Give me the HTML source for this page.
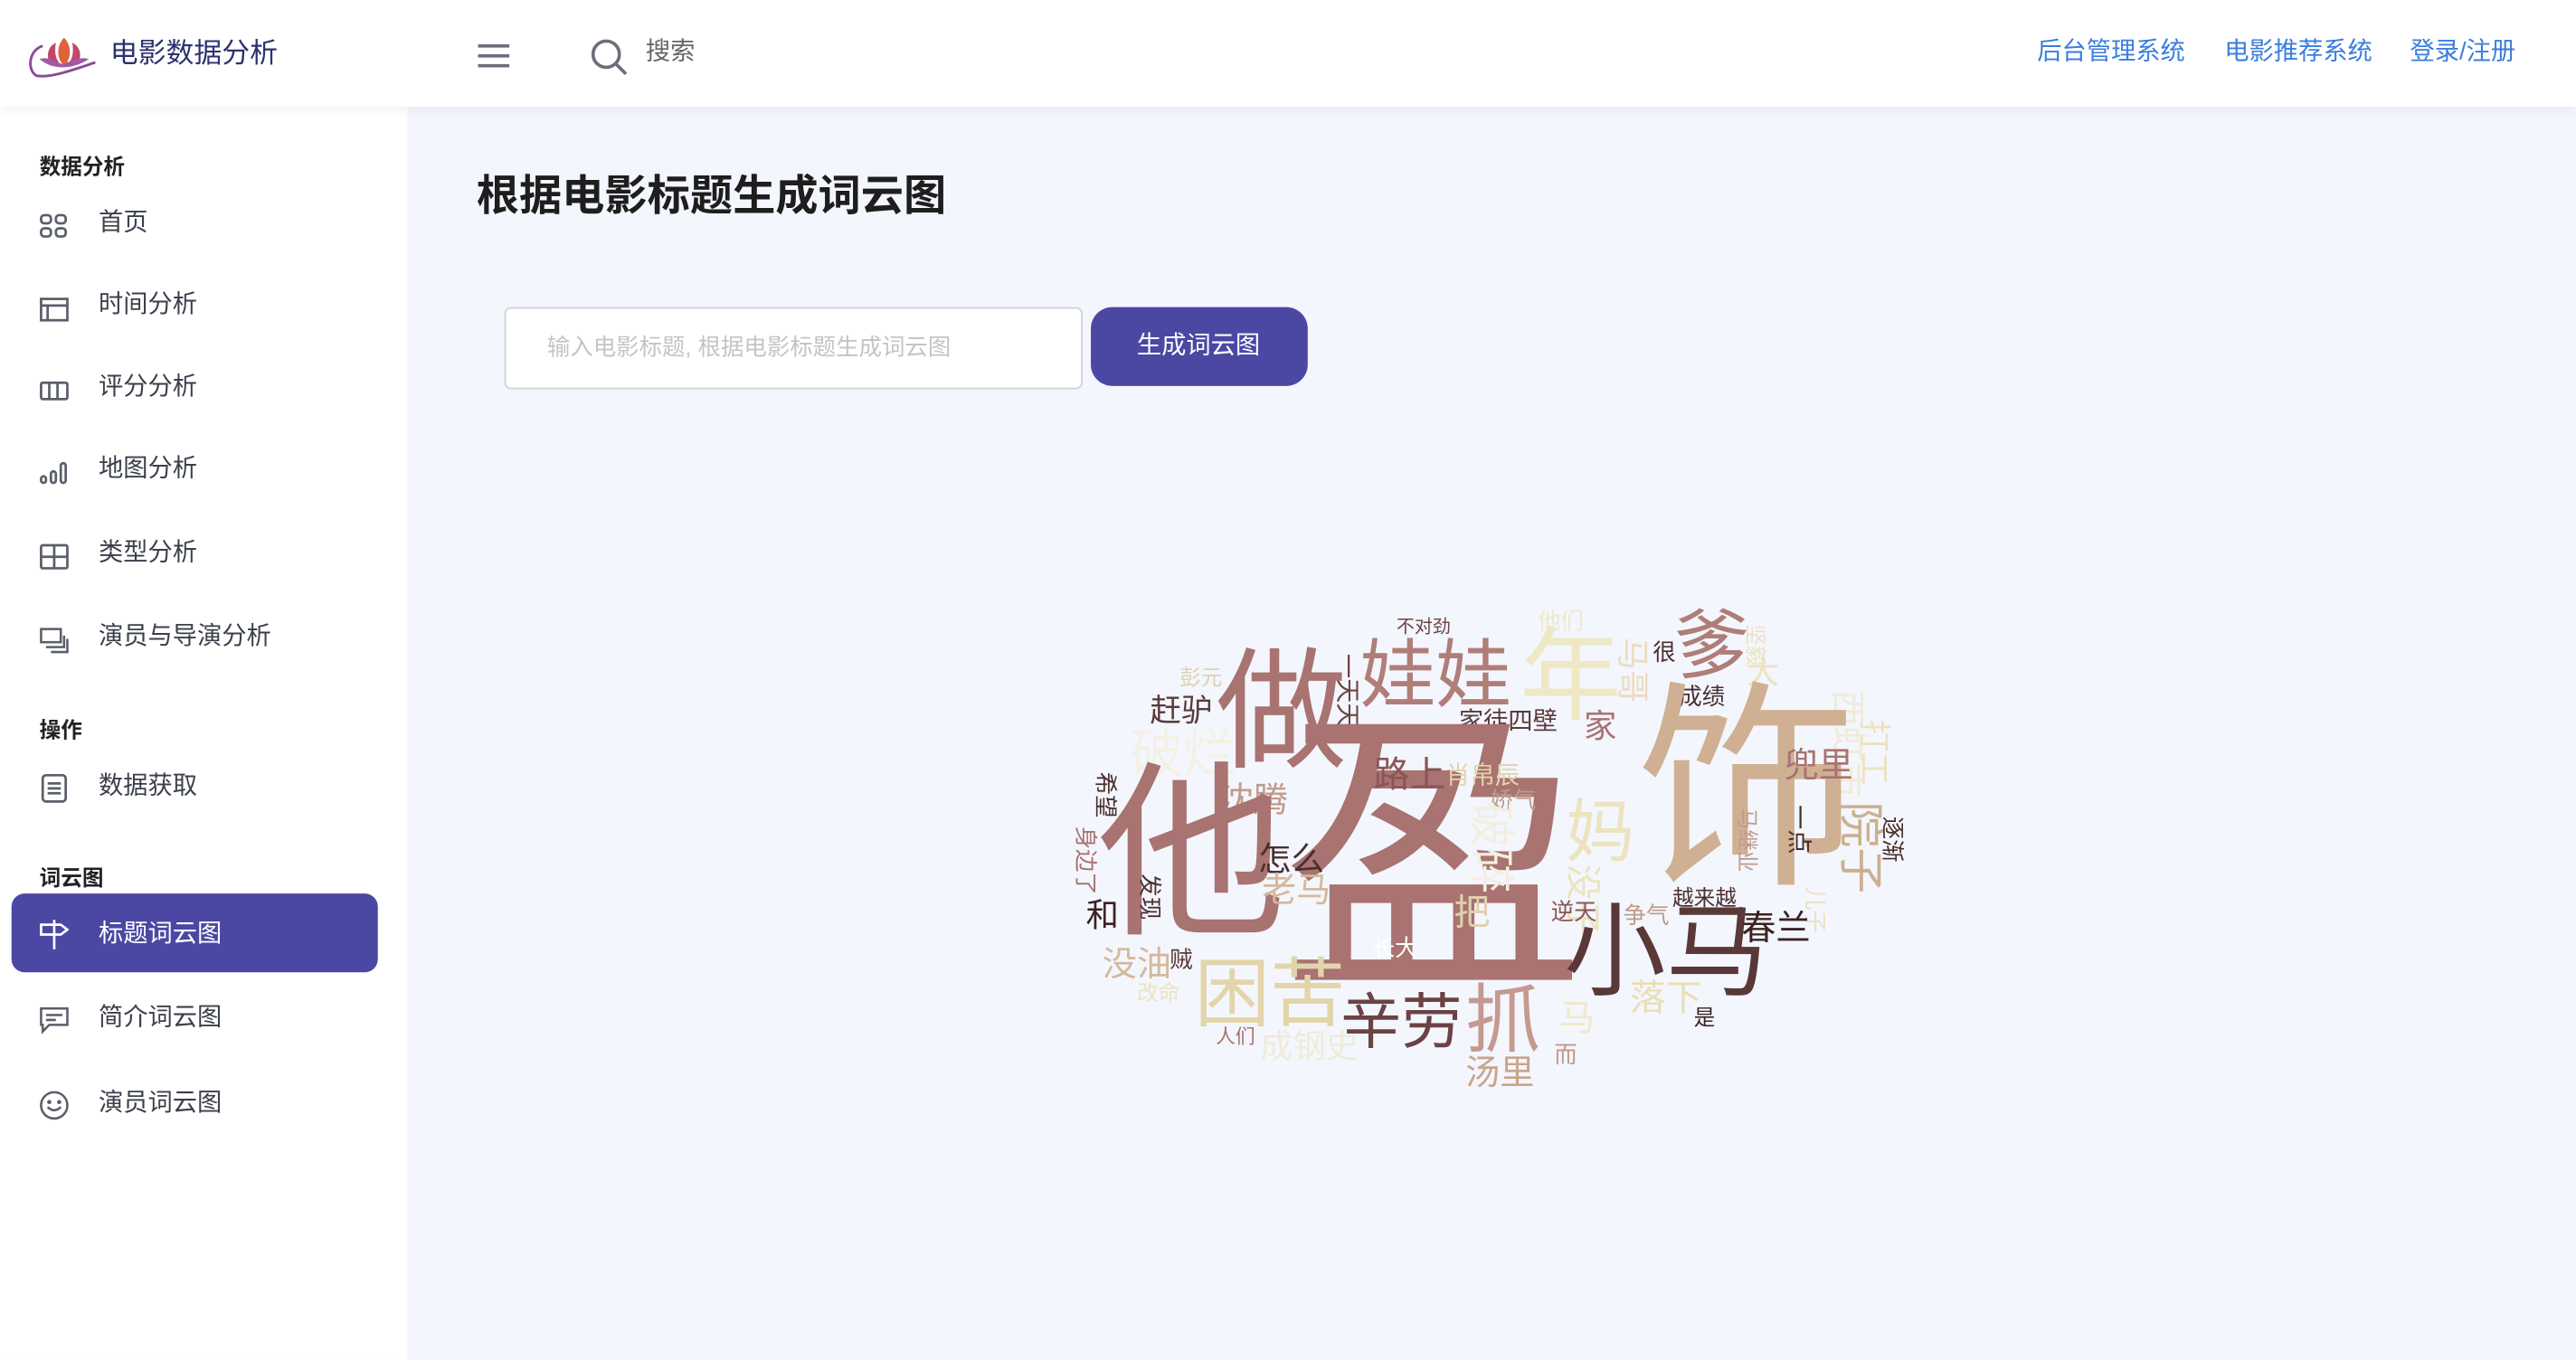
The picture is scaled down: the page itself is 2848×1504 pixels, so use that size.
<!DOCTYPE html>
<html><head><meta charset="utf-8">
<style>
*{margin:0;padding:0;box-sizing:border-box}
html,body{width:2848px;height:1504px;overflow:hidden;background:#f3f6fd}
body{font-family:"Liberation Sans","Noto Sans CJK SC",sans-serif}
#w{position:absolute;left:0;top:0;width:1568px;height:828px;transform:scale(1.81633);transform-origin:0 0;background:#f3f6fd}
.a{position:absolute;white-space:nowrap;line-height:1}
#hd{position:absolute;left:0;top:0;width:1568px;height:65px;background:#fff;box-shadow:0 2px 6px rgba(0,0,0,.06);z-index:2}
#sb{position:absolute;left:0;top:65px;width:248px;height:763px;background:#fff}
.lab{position:absolute;left:24px;font-size:13px;font-weight:bold;color:#222}
.it{position:absolute;left:60px;font-size:15px;color:#3a3f4a;line-height:1}
.ic{position:absolute;left:24px;width:18px;height:18px}
.v{writing-mode:vertical-rl;text-orientation:sideways}
</style></head><body><div id="w">
<div id="hd">
 <svg class="a" style="left:16px;top:20px" width="44" height="28" viewBox="0 0 44 28">
  <path d="M10 8 C2 10 0 22 6 26 C14 28 30 22 42 18" fill="none" stroke="#8a4a9a" stroke-width="1.6"/>
  <path d="M14 18 C12 12 14 8 18 6 C17 12 18 16 20 18Z" fill="#c0486a"/>
  <path d="M22 19 C18 14 19 7 23 3 C27 7 28 14 24 19Z" fill="#e2603a"/>
  <path d="M26 18 C28 16 29 12 28 6 C32 8 34 12 32 18Z" fill="#c0486a"/>
  <path d="M8 16 C14 14 18 18 22 19 C26 18 32 14 38 16 C32 20 26 21 22 21 C16 21 12 19 8 16Z" fill="#a25aa0"/>
 </svg>
 <div class="a" style="left:67px;top:24px;font-size:17px;color:#2c3270">电影数据分析</div>
 <svg class="a" style="left:290px;top:26px" width="21" height="16"><g stroke="#6b6f7a" stroke-width="2"><line x1="1" y1="2" x2="20" y2="2"/><line x1="1" y1="8" x2="20" y2="8"/><line x1="1" y1="14" x2="20" y2="14"/></g></svg>
 <svg class="a" style="left:359px;top:23px" width="24" height="24"><circle cx="10" cy="10" r="8" fill="none" stroke="#6b6f7a" stroke-width="2"/><line x1="16" y1="16" x2="22" y2="22" stroke="#6b6f7a" stroke-width="2"/></svg>
 <div class="a" style="left:393px;top:24px;font-size:15px;color:#666">搜索</div>
 <div class="a" style="left:1240px;top:24px;font-size:15px;color:#3b7ddd">后台管理系统</div>
 <div class="a" style="left:1354px;top:24px;font-size:15px;color:#3b7ddd">电影推荐系统</div>
 <div class="a" style="left:1467px;top:24px;font-size:15px;color:#3b7ddd">登录/注册</div>
</div>
<div id="sb">
 <div class="lab" style="top:26px">数据分析</div>
 <svg class="ic" style="top:64px" viewBox="0 0 18 18" fill="none" stroke="#5a5f6a" stroke-width="1.5"><rect x="1" y="2" width="6" height="5" rx="2"/><rect x="10" y="2" width="6" height="5" rx="2"/><rect x="1" y="10" width="6" height="5" rx="2"/><rect x="10" y="10" width="6" height="5" rx="2"/></svg>
 <div class="it" style="top:63px">首页</div>
 <svg class="ic" style="top:114px" viewBox="0 0 18 18" fill="none" stroke="#5a5f6a" stroke-width="1.5"><rect x="1" y="3" width="16" height="13"/><line x1="1" y1="7" x2="17" y2="7"/><line x1="5" y1="7" x2="5" y2="16"/></svg>
 <div class="it" style="top:113px">时间分析</div>
 <svg class="ic" style="top:164px" viewBox="0 0 18 18" fill="none" stroke="#5a5f6a" stroke-width="1.5"><rect x="1" y="4" width="16" height="10" rx="1"/><line x1="6" y1="4" x2="6" y2="14"/><line x1="11" y1="4" x2="11" y2="14"/></svg>
 <div class="it" style="top:163px">评分分析</div>
 <svg class="ic" style="top:214px" viewBox="0 0 18 18" fill="none" stroke="#5a5f6a" stroke-width="1.5"><rect x="1" y="11" width="3" height="4" rx="1.5"/><rect x="7" y="8" width="3" height="7" rx="1.5"/><rect x="13" y="3" width="3" height="12" rx="1.5"/></svg>
 <div class="it" style="top:213px">地图分析</div>
 <svg class="ic" style="top:265px" viewBox="0 0 18 18" fill="none" stroke="#5a5f6a" stroke-width="1.5"><rect x="1" y="2" width="16" height="14" rx="1"/><line x1="9" y1="2" x2="9" y2="16"/><line x1="1" y1="9" x2="17" y2="9"/></svg>
 <div class="it" style="top:264px">类型分析</div>
 <svg class="ic" style="top:315px" viewBox="0 0 18 18" fill="none" stroke="#5a5f6a" stroke-width="1.4"><rect x="1" y="3" width="12" height="8"/><path d="M4 14 H15 V7 M17 9 V17 H7"/></svg>
 <div class="it" style="top:315px">演员与导演分析</div>
 <div class="lab" style="top:369px">操作</div>
 <svg class="ic" style="top:406px" viewBox="0 0 18 18" fill="none" stroke="#5a5f6a" stroke-width="1.5"><rect x="2" y="1" width="14" height="16" rx="2"/><line x1="5" y1="6" x2="13" y2="6"/><line x1="5" y1="9" x2="13" y2="9"/><line x1="5" y1="12" x2="13" y2="12"/></svg>
 <div class="it" style="top:406px">数据获取</div>
 <div class="lab" style="top:459px">词云图</div>
 <div style="position:absolute;left:7px;top:479px;width:223px;height:48px;background:#4b48a3;border-radius:8px"></div>
 <svg class="ic" style="top:495px" viewBox="0 0 18 18" fill="none" stroke="#fff" stroke-width="1.5"><path d="M1 3 H13 L17 6 L13 9 H1Z"/><line x1="9" y1="0" x2="9" y2="18"/></svg>
 <div class="it" style="top:496px;color:#fff">标题词云图</div>
 <svg class="ic" style="top:547px" viewBox="0 0 18 18" fill="none" stroke="#5a5f6a" stroke-width="1.4"><path d="M1 2 H17 V12 H6 L2 16 V12 H1Z"/><line x1="4" y1="6" x2="14" y2="6"/><line x1="4" y1="9" x2="10" y2="9"/></svg>
 <div class="it" style="top:547px">简介词云图</div>
 <svg class="ic" style="top:599px" viewBox="0 0 18 18" fill="none" stroke="#5a5f6a" stroke-width="1.4"><circle cx="9" cy="9" r="8"/><path d="M5 10 Q9 14 13 10"/><circle cx="6" cy="7" r=".6"/><circle cx="12" cy="7" r=".6"/></svg>
 <div class="it" style="top:599px">演员词云图</div>
</div>
<div class="a" style="left:290px;top:106px;font-size:26px;font-weight:bold;color:#1e1e1e">根据电影标题生成词云图</div>
<div style="position:absolute;left:307px;top:187px;width:352px;height:50px;background:#fff;border:1px solid #cfd2d8;border-radius:4px"></div>
<div class="a" style="left:333px;top:204px;font-size:14px;color:#c4c4c4">输入电影标题, 根据电影标题生成词云图</div>
<div style="position:absolute;left:664px;top:187px;width:132px;height:48px;background:#4b48a3;border-radius:13px"></div>
<div class="a" style="left:692px;top:203px;font-size:15px;color:#fff">生成词云图</div>

<!-- word cloud -->
<div class="a" style="left:850px;top:377px;font-size:11px;color:#6b4343">不对劲</div>
<div class="a" style="left:936px;top:371px;font-size:14px;color:#efe9c9">他们</div>
<div class="a" style="left:718px;top:406px;font-size:13px;color:#e0d0b0">彭元</div>
<div class="a v" style="left:812px;top:398px;font-size:15px;color:#6b4343">一天天</div>
<div class="a" style="left:828px;top:388px;font-size:46px;color:#b07d78">娃娃</div>
<div class="a" style="left:925px;top:382px;font-size:62px;color:#eee8c4">年</div>
<div class="a v" style="left:983px;top:388px;font-size:20px;color:#ecdcc0">马哥</div>
<div class="a" style="left:1006px;top:390px;font-size:14px;color:#4a2e2e">很</div>
<div class="a" style="left:1019px;top:370px;font-size:46px;color:#b07d78">爹</div>
<div class="a" style="left:1063px;top:400px;font-size:20px;color:#ece3bf">大</div>
<div class="a v" style="left:1062px;top:380px;font-size:13px;color:#ece3bf">坚毅</div>
<div class="a" style="left:1022px;top:417px;font-size:14px;color:#4a2e2e">成绩</div>
<div class="a v" style="left:1113px;top:420px;font-size:22px;color:#f0ebd8">西虹市</div>
<div class="a" style="left:740px;top:394px;font-size:80px;color:#a87370">做</div>
<div class="a" style="left:700px;top:424px;font-size:19px;color:#5a3a3a">赶驴</div>
<div class="a" style="left:888px;top:432px;font-size:15px;color:#5a3a3a">家徒四壁</div>
<div class="a" style="left:964px;top:433px;font-size:20px;color:#a87370">家</div>
<div class="a" style="left:688px;top:443px;font-size:32px;color:#f4f1e4">破烂</div>
<div class="a v" style="left:1130px;top:438px;font-size:20px;color:#ece3bf">打工</div>
<div class="a" style="left:996px;top:414px;font-size:135px;color:#cfb092">饰</div>
<div class="a" style="left:780px;top:432px;font-size:185px;color:#a87370">盈</div>
<div class="a" style="left:836px;top:461px;font-size:22px;color:#8a5555">路上</div>
<div class="a" style="left:880px;top:465px;font-size:15px;color:#e3d4aa">肖帛辰</div>
<div class="a" style="left:1086px;top:456px;font-size:21px;color:#a87370">兜里</div>
<div class="a" style="left:742px;top:477px;font-size:21px;color:#c09a8a">沈腾</div>
<div class="a" style="left:907px;top:480px;font-size:14px;color:#c09a8a">娇气</div>
<div class="a v" style="left:666px;top:470px;font-size:14px;color:#4a2e2e">希望</div>
<div class="a" style="left:668px;top:464px;font-size:115px;color:#a87370">他</div>
<div class="a" style="left:953px;top:486px;font-size:42px;color:#ece3bf">妈</div>
<div class="a v" style="left:893px;top:488px;font-size:28px;color:#f2efe2">破碎</div>
<div class="a v" style="left:1087px;top:490px;font-size:15px;color:#4a2e2e">一点</div>
<div class="a v" style="left:1118px;top:488px;font-size:28px;color:#ccb08e">院子</div>
<div class="a v" style="left:1145px;top:497px;font-size:14px;color:#4a2e2e">逐渐</div>
<div class="a v" style="left:1057px;top:492px;font-size:13px;color:#c09a8a">马继业</div>
<div class="a v" style="left:654px;top:503px;font-size:14px;color:#a87370">身边了</div>
<div class="a" style="left:766px;top:514px;font-size:20px;color:#4a2e2e">怎么</div>
<div class="a" style="left:768px;top:532px;font-size:21px;color:#d4b89b">老马</div>
<div class="a v" style="left:952px;top:526px;font-size:22px;color:#ece3bf">没子</div>
<div class="a v" style="left:693px;top:532px;font-size:14px;color:#4a2e2e">发现</div>
<div class="a" style="left:661px;top:548px;font-size:20px;color:#3a2222">和</div>
<div class="a" style="left:885px;top:545px;font-size:22px;color:#e0d0b0">把</div>
<div class="a" style="left:944px;top:548px;font-size:14px;color:#8a5555">逆天</div>
<div class="a" style="left:988px;top:550px;font-size:14px;color:#c09a8a">争气</div>
<div class="a" style="left:1018px;top:540px;font-size:13px;color:#4a2e2e">越来越</div>
<div class="a v" style="left:1098px;top:540px;font-size:14px;color:#ece3bf">儿子</div>
<div class="a" style="left:952px;top:550px;font-size:62px;color:#5a3838">小马</div>
<div class="a" style="left:1060px;top:555px;font-size:21px;color:#3a2222">春兰</div>
<div class="a" style="left:835px;top:570px;font-size:14px;color:#fff">长大</div>
<div class="a" style="left:671px;top:577px;font-size:21px;color:#d4b89b">没油</div>
<div class="a" style="left:712px;top:577px;font-size:14px;color:#5a3a3a">贼</div>
<div class="a" style="left:727px;top:582px;font-size:46px;color:#e3d4aa">困苦</div>
<div class="a" style="left:692px;top:598px;font-size:13px;color:#ece3bf">改命</div>
<div class="a" style="left:992px;top:597px;font-size:22px;color:#e8dfb3">落下</div>
<div class="a" style="left:949px;top:609px;font-size:22px;color:#efe9c9">马</div>
<div class="a" style="left:816px;top:604px;font-size:37px;color:#6b4343">辛劳</div>
<div class="a" style="left:892px;top:598px;font-size:46px;color:#c49a90">抓</div>
<div class="a" style="left:1031px;top:613px;font-size:13px;color:#3a2222">是</div>
<div class="a" style="left:740px;top:625px;font-size:12px;color:#a87370">人们</div>
<div class="a" style="left:767px;top:628px;font-size:20px;color:#f0ebd8">成钢史</div>
<div class="a" style="left:946px;top:635px;font-size:14px;color:#c09a8a">而</div>
<div class="a" style="left:892px;top:643px;font-size:21px;color:#c8a58a">汤里</div>
</div></body></html>
